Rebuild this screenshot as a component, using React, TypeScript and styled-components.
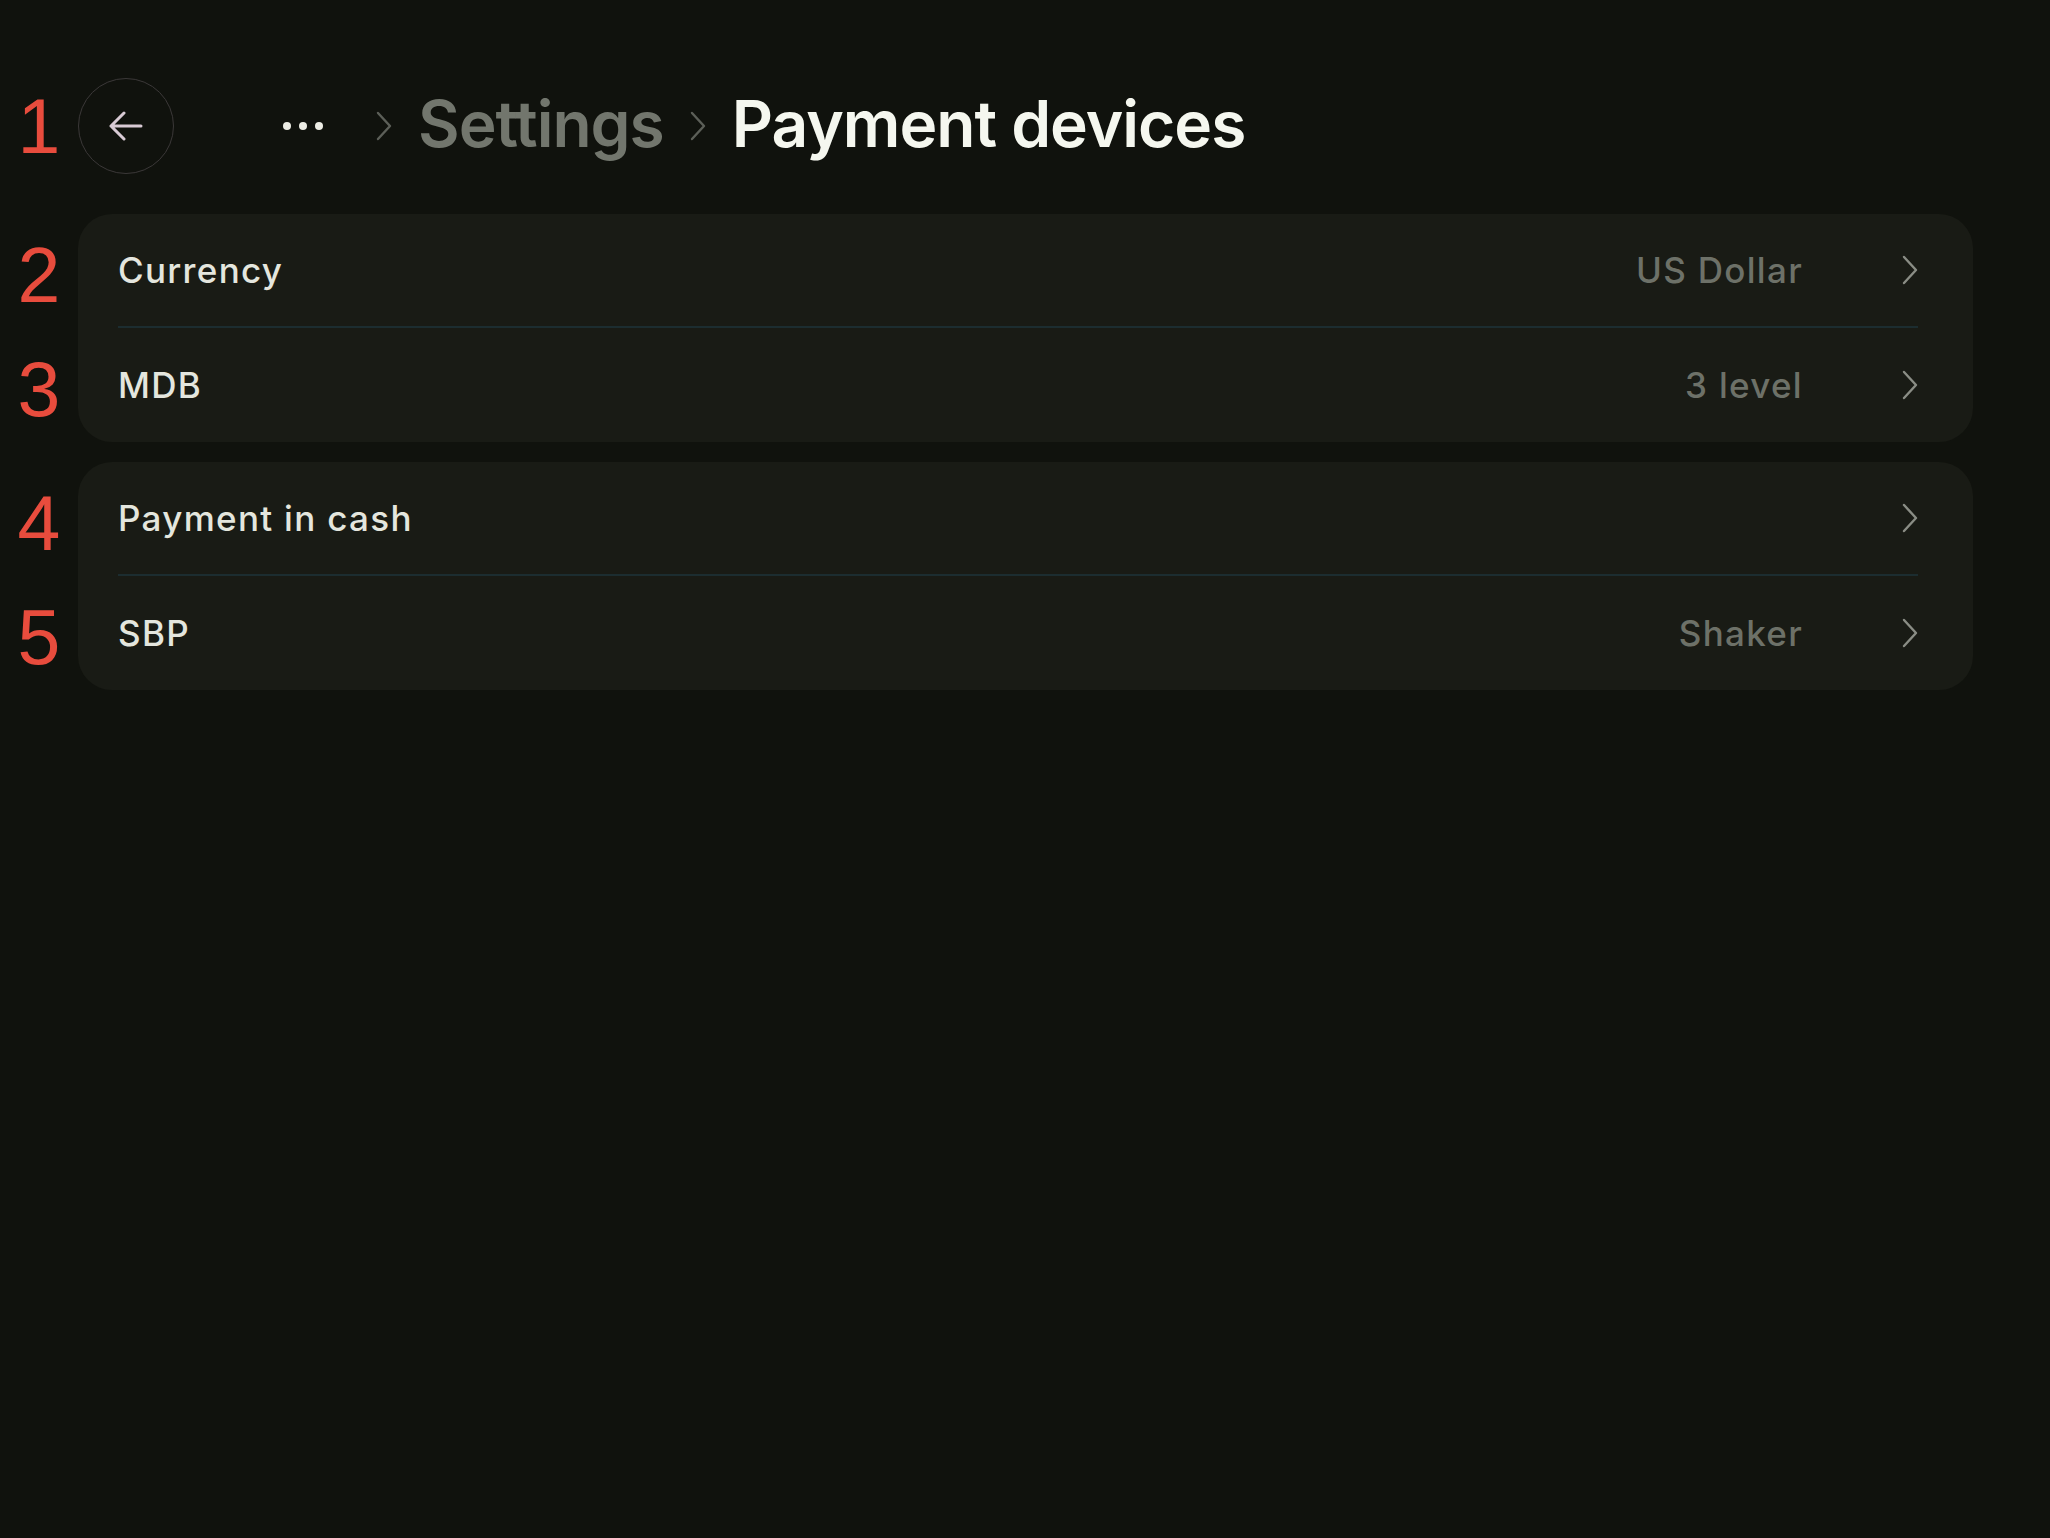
import styled, { createGlobalStyle } from "styled-components";

interface Item {
  mark: number;
  label: string;
  value?: string;
}

const groups: Item[][] = [
  [
    { mark: 2, label: "Currency", value: "US Dollar" },
    { mark: 3, label: "MDB", value: "3 level" },
  ],
  [
    { mark: 4, label: "Payment in cash" },
    { mark: 5, label: "SBP", value: "Shaker" },
  ],
];

function Chevron({ color }: { color: string }) {
  return (
    <svg width="16" height="30" viewBox="0 0 16 30" fill="none">
      <path
        d="M2 2 L14 15 L2 28"
        stroke={color}
        strokeWidth="2.4"
        strokeLinecap="round"
        strokeLinejoin="round"
      />
    </svg>
  );
}

export default function App() {
  return (
    <Page>
      <GlobalStyle />
      <Header>
        <Marker>1</Marker>
        <BackButton aria-label="Back">
          <svg width="34" height="30" viewBox="0 0 34 30" fill="none">
            <path
              d="M15 2 L2 15 L15 28 M2 15 H32"
              stroke="#d8cad4"
              strokeWidth="3"
              strokeLinecap="round"
              strokeLinejoin="round"
            />
          </svg>
        </BackButton>
        <Crumbs>
          <Dots>
            <span />
            <span />
            <span />
          </Dots>
          <Chevron color="#5c5f58" />
          <Crumb>Settings</Crumb>
          <Chevron color="#5c5f58" />
          <Crumb $current>Payment devices</Crumb>
        </Crumbs>
      </Header>

      <Groups>
        {groups.map((group, i) => (
          <Group key={i}>
            <MarkerColumn>
              {group.map((item) => (
                <Marker key={item.mark} $row>
                  {item.mark}
                </Marker>
              ))}
            </MarkerColumn>
            <Card>
              {group.map((item) => (
                <Row key={item.mark}>
                  <Label>{item.label}</Label>
                  <Value>{item.value}</Value>
                  <Arrow>
                    <Chevron color="#8a8d85" />
                  </Arrow>
                </Row>
              ))}
            </Card>
          </Group>
        ))}
      </Groups>
    </Page>
  );
}

const GlobalStyle = createGlobalStyle`
  * {
    box-sizing: border-box;
  }
  html, body {
    margin: 0;
    background: #10120d;
  }
  body {
    font-family: Inter, "Noto Sans", sans-serif;
    min-height: 1538px;
  }
`;

const Page = styled.div`
  padding: 78px 77px 0 0;
`;

const Header = styled.div`
  display: flex;
  align-items: center;
  height: 96px;
`;

const Marker = styled.div<{ $row?: boolean }>`
  width: 78px;
  flex-shrink: 0;
  display: flex;
  align-items: center;
  justify-content: center;
  height: ${(p) => (p.$row ? "114px" : "auto")};
  padding-top: ${(p) => (p.$row ? "8px" : "0")};
  font-family: "Liberation Sans", Arial, sans-serif;
  font-size: 77px;
  line-height: 1;
  color: #e84c3d;
`;

const BackButton = styled.button`
  width: 96px;
  height: 96px;
  flex-shrink: 0;
  border-radius: 50%;
  border: 1.5px solid #3b3838;
  background: transparent;
  display: flex;
  align-items: center;
  justify-content: center;
  padding: 0;
  cursor: pointer;
`;

const Crumbs = styled.div`
  display: flex;
  align-items: center;
  margin-left: 109px;
  gap: 26px;
`;

const Dots = styled.div`
  display: flex;
  gap: 8px;
  margin-right: 27px;

  span {
    width: 8px;
    height: 8px;
    border-radius: 50%;
    background: #ecece4;
  }
`;

const Crumb = styled.div<{ $current?: boolean }>`
  font-size: 64px;
  font-weight: 600;
  letter-spacing: -1px;
  color: ${(p) => (p.$current ? "#f5f7ef" : "#72766d")};
  line-height: 1;
  padding-bottom: 4px;
`;

const Groups = styled.div`
  display: flex;
  flex-direction: column;
  gap: 20px;
  margin-top: 40px;
`;

const Group = styled.div`
  display: flex;
`;

const MarkerColumn = styled.div`
  display: flex;
  flex-direction: column;
`;

const Card = styled.div`
  flex: 1;
  background: #191b15;
  border-radius: 34px;
  padding: 0 55px 0 40px;
`;

const Row = styled.div`
  height: 114px;
  display: flex;
  align-items: center;
  border-bottom: 2px solid #1c2d30;

  &:last-child {
    border-bottom: none;
  }
`;

const Label = styled.div`
  font-size: 35px;
  font-weight: 500;
  letter-spacing: 1.3px;
  color: #e4e6de;
`;

const Value = styled.div`
  margin-left: auto;
  font-size: 35px;
  font-weight: 500;
  letter-spacing: 1.3px;
  color: #6d7168;
`;

const Arrow = styled.div`
  margin-left: 99px;
  display: flex;
  align-items: center;
`;
